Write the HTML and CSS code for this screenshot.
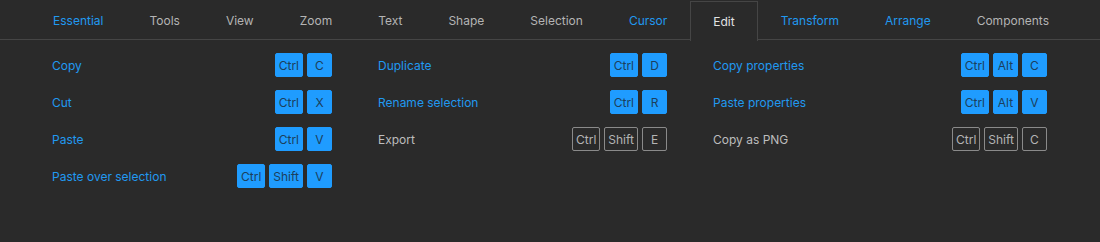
FILE: index.html
```html
<!DOCTYPE html>
<html lang="en">

<head>
    <meta charset="UTF-8">
    <meta name="viewport" content="width=device-width, initial-scale=1.0">
    <title>Shortcuts</title>
    <link rel="stylesheet" href="styles.css">
</head>

<body>
    <!-- Tabs -->
    <div class="tabs">
        <a class="tab blue">Essential</a>
        <a class="tab">Tools</a>
        <a class="tab">View</a>
        <a class="tab">Zoom</a>
        <a class="tab">Text</a>
        <a class="tab">Shape</a>
        <a class="tab">Selection</a>
        <a class="tab blue">Cursor</a>
        <a class="tab active">Edit</a>
        <a class="tab blue">Transform</a>
        <a class="tab blue">Arrange</a>
        <a class="tab">Components</a>
    </div>

    <!-- Shortcut list -->
    <div class="grid">
        <div class="col col-1">
            <div class="row blue">
                <span class="label">Copy</span>
                <span class="keys"><kbd>Ctrl</kbd><kbd>C</kbd></span>
            </div>
            <div class="row blue">
                <span class="label">Cut</span>
                <span class="keys"><kbd>Ctrl</kbd><kbd>X</kbd></span>
            </div>
            <div class="row blue">
                <span class="label">Paste</span>
                <span class="keys"><kbd>Ctrl</kbd><kbd>V</kbd></span>
            </div>
            <div class="row blue">
                <span class="label">Paste over selection</span>
                <span class="keys"><kbd>Ctrl</kbd><kbd>Shift</kbd><kbd>V</kbd></span>
            </div>
        </div>

        <div class="col col-2">
            <div class="row blue">
                <span class="label">Duplicate</span>
                <span class="keys"><kbd>Ctrl</kbd><kbd>D</kbd></span>
            </div>
            <div class="row blue">
                <span class="label">Rename selection</span>
                <span class="keys"><kbd>Ctrl</kbd><kbd>R</kbd></span>
            </div>
            <div class="row">
                <span class="label">Export</span>
                <span class="keys"><kbd>Ctrl</kbd><kbd>Shift</kbd><kbd>E</kbd></span>
            </div>
        </div>

        <div class="col col-3">
            <div class="row blue">
                <span class="label">Copy properties</span>
                <span class="keys"><kbd>Ctrl</kbd><kbd>Alt</kbd><kbd>C</kbd></span>
            </div>
            <div class="row blue">
                <span class="label">Paste properties</span>
                <span class="keys"><kbd>Ctrl</kbd><kbd>Alt</kbd><kbd>V</kbd></span>
            </div>
            <div class="row">
                <span class="label">Copy as PNG</span>
                <span class="keys"><kbd>Ctrl</kbd><kbd>Shift</kbd><kbd>C</kbd></span>
            </div>
        </div>
    </div>
</body>

</html>
```

FILE: styles.css
```css
/* Base */
body {
    font-family: "Inter", "Liberation Sans", sans-serif;
    font-size: 12px;
    background-color: #2a2a2a;
    color: #bdbdbd;
    margin: 0;
    padding: 0;
}

/* Tab bar */
.tabs {
    display: flex;
    height: 39px;
    padding-left: 30px;
    border-bottom: 1px solid #454545;
}

.tab {
    display: flex;
    align-items: center;
    padding: 0 22px;
    margin-bottom: -1px;
    border: 1px solid transparent;
    border-bottom: none;
    color: #b4b4b4;
    cursor: pointer;
}

.tab.blue {
    color: #2199f0;
}

.tab.active {
    color: #e2e2e2;
    border-color: #454545;
    background-color: #2a2a2a;
    height: 39px;
    margin-top: 1px;
}

/* Shortcut grid */
.grid {
    display: grid;
    grid-template-columns: 280px 289px 334px;
    column-gap: 46px;
    padding: 13px 0 0 52px;
}

.row {
    display: flex;
    justify-content: space-between;
    align-items: center;
    height: 24px;
    margin-bottom: 13px;
}

.row.blue .label {
    color: #2199f0;
}

.keys {
    display: flex;
    gap: 4px;
}

kbd {
    font-family: inherit;
    font-size: 12px;
    box-sizing: border-box;
    min-width: 25px;
    height: 24px;
    padding: 0 3px;
    display: flex;
    align-items: center;
    justify-content: center;
    border: 1px solid #8a8a8a;
    border-radius: 2px;
    color: #b4b4b4;
}

.row.blue kbd {
    background-color: #1f9cff;
    border-color: #1f9cff;
    color: #1c3f5c;
}
```
